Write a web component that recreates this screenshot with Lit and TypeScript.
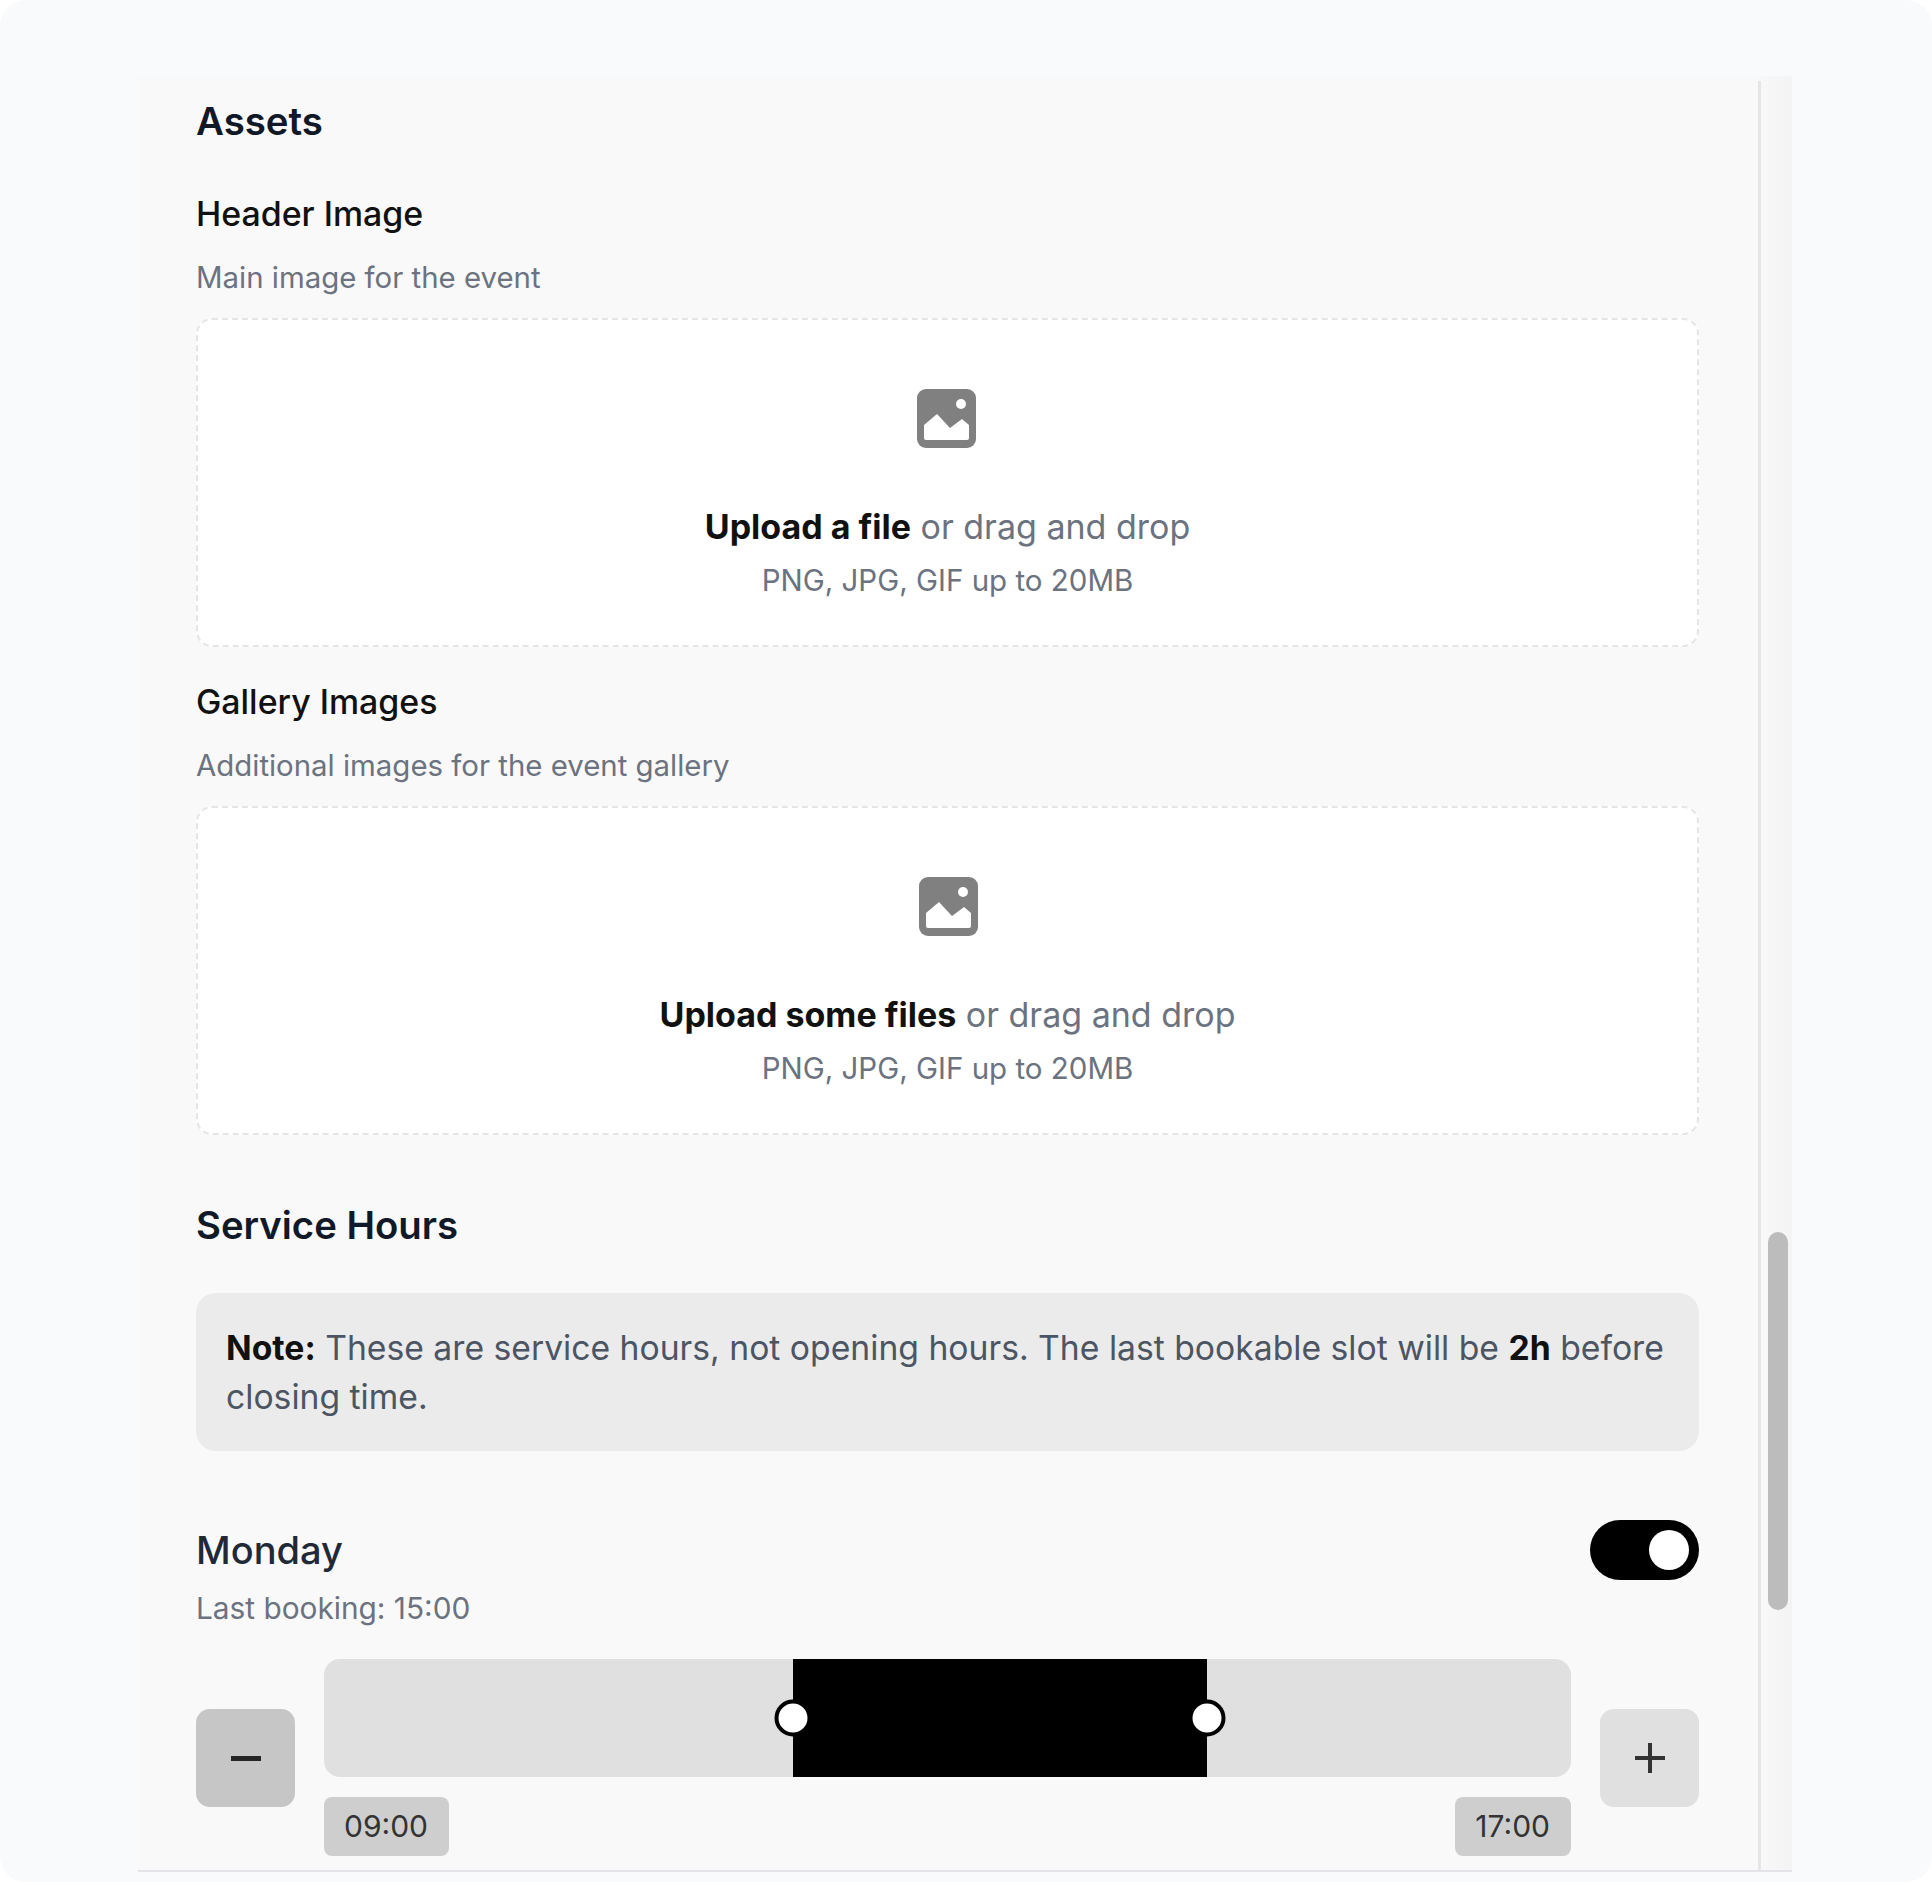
import {html, css, LitElement} from 'lit';
import {customElement} from 'lit/decorators.js';

const imageIcon = html`<svg class="icon-svg" viewBox="0 0 59 59" width="59" height="59">
  <rect width="59" height="59" rx="9" fill="#808080"></rect>
  <circle cx="44" cy="15" r="5" fill="#fff"></circle>
  <path d="M7 36 L20 25 L33 39 L45 30 L52 36 V49 Q52 51 50 51 H9 Q7 51 7 49 Z" fill="#fff"></path>
</svg>`;

@customElement('app-root')
class AppRoot extends LitElement {
  static styles = css`
    :host {
      display: block;
      width: 1932px;
      height: 1882px;
      background: #fff;
      font-family: Inter, 'Liberation Sans', sans-serif;
    }

    .frame {
      height: 1882px;
      box-sizing: border-box;
      background: #f9fafb;
      border-radius: 26px;
      padding: 76px 140px 10px 138px;
    }

    .panel {
      display: flex;
      height: 1796px;
      box-sizing: border-box;
      background: #f9f9f9;
      border-bottom: 2px solid #e4e4e8;
      overflow: hidden;
    }

    .main {
      flex: 1;
      min-width: 0;
      padding: 0 59px 0 58px;
    }

    .gutter {
      width: 34px;
      display: flex;
      background: linear-gradient(90deg, #f8f8f8, #f4f4f4);
    }

    .gutter-line {
      width: 3px;
      margin-top: 5px;
      background: #e6e6e6;
    }

    .thumb {
      width: 20px;
      height: 378px;
      margin: 1156px 0 0 7px;
      background: #bcbcbc;
      border-radius: 10px;
    }

    h2 {
      margin: 0;
      font-weight: 600;
      color: #111827;
    }

    .assets-title {
      font-size: 38.4px;
      line-height: 50px;
      margin-top: 20px;
    }

    .field-label {
      font-size: 33.9px;
      line-height: 44px;
      font-weight: 500;
      color: #111;
    }

    .field-label.first {
      margin-top: 46px;
    }

    .field-label.second {
      margin-top: 33px;
    }

    .field-hint {
      font-size: 29.4px;
      line-height: 40px;
      color: #6b7280;
      margin-top: 22px;
    }

    .dropzone {
      box-sizing: border-box;
      height: 329px;
      margin-top: 20px;
      background: #fff;
      border: 2px dashed #e5e5e5;
      border-radius: 16px;
      display: flex;
      flex-direction: column;
      align-items: center;
      padding-top: 69px;
    }

    .icon-svg {
      display: block;
    }

    .icon-first {
      margin-right: 3px;
    }

    .icon-second {
      margin-left: 2px;
    }

    .drop-main {
      font-size: 34px;
      line-height: 48px;
      margin-top: 55px;
      color: #6b7280;
    }

    .drop-main b {
      font-weight: 700;
      color: #111;
    }

    .drop-sub {
      font-size: 29.5px;
      line-height: 40px;
      margin-top: 9px;
      color: #6b7280;
    }

    .hours-title {
      font-size: 38.3px;
      line-height: 50px;
      margin-top: 65px;
    }

    .note {
      box-sizing: border-box;
      height: 158px;
      margin-top: 43px;
      padding: 30px 30px;
      background: #ebebeb;
      border-radius: 20px;
      font-size: 33.7px;
      line-height: 49px;
      color: #4b5563;
    }

    .note b {
      font-weight: 700;
      color: #111;
    }

    .day-row {
      display: flex;
      justify-content: space-between;
      align-items: center;
      margin-top: 69px;
    }

    .day-name {
      font-size: 38px;
      line-height: 60px;
      font-weight: 500;
      color: #1f2937;
    }

    .toggle {
      width: 109px;
      height: 60px;
      box-sizing: border-box;
      background: #000;
      border-radius: 30px;
      display: flex;
      justify-content: flex-end;
      align-items: center;
      padding-right: 10px;
    }

    .knob {
      width: 40px;
      height: 40px;
      background: #fff;
      border-radius: 50%;
    }

    .last-booking {
      font-size: 29.8px;
      line-height: 40px;
      color: #6b7280;
      margin-top: 8px;
    }

    .slider-row {
      display: grid;
      grid-template-columns: 99px 1fr 99px;
      column-gap: 29px;
      align-items: center;
      margin-top: 31px;
    }

    .step {
      height: 98px;
      border-radius: 14px;
      display: flex;
      align-items: center;
      justify-content: center;
    }

    .step.minus {
      background: #c6c6c6;
    }

    .step.plus {
      background: #e0e0e0;
    }

    .track {
      position: relative;
      height: 118px;
      background: #e0e0e0;
      border-radius: 16px;
    }

    .range {
      position: absolute;
      top: 0;
      bottom: 0;
      background: #000;
    }

    .handle {
      position: absolute;
      top: 50%;
      width: 37px;
      height: 37px;
      box-sizing: border-box;
      background: #fff;
      border: 4px solid #000;
      border-radius: 50%;
      transform: translate(-50%, -50%);
    }

    .chips {
      display: flex;
      justify-content: space-between;
      margin-top: 20px;
    }

    .chip {
      height: 59px;
      box-sizing: border-box;
      padding: 0 21px 2px 20px;
      display: flex;
      align-items: center;
      background: #cecece;
      border-radius: 8px;
      font-size: 30px;
      color: #333;
    }
  `;

  // track runs 09:00 to 17:00 between these two pixel stops
  range = {start: 469, end: 883};

  render() {
    const {start, end} = this.range;
    return html`
      <div class="frame">
        <div class="panel">
          <div class="main">
            <h2 class="assets-title">Assets</h2>

            <div class="field-label first">Header Image</div>
            <div class="field-hint">Main image for the event</div>
            <div class="dropzone">
              <div class="icon-first">${imageIcon}</div>
              <div class="drop-main"><b>Upload a file</b> or drag and drop</div>
              <div class="drop-sub">PNG, JPG, GIF up to 20MB</div>
            </div>

            <div class="field-label second">Gallery Images</div>
            <div class="field-hint">Additional images for the event gallery</div>
            <div class="dropzone">
              <div class="icon-second">${imageIcon}</div>
              <div class="drop-main"><b>Upload some files</b> or drag and drop</div>
              <div class="drop-sub">PNG, JPG, GIF up to 20MB</div>
            </div>

            <h2 class="hours-title">Service Hours</h2>
            <div class="note">
              <b>Note:</b> These are service hours, not opening hours. The last bookable slot will be <b>2h</b> before closing time.
            </div>

            <div class="day-row">
              <div class="day-name">Monday</div>
              <div class="toggle"><div class="knob"></div></div>
            </div>
            <div class="last-booking">Last booking: 15:00</div>

            <div class="slider-row">
              <div class="step minus">
                <svg width="30" height="30" viewBox="0 0 30 30"><rect x="0" y="13" width="30" height="5" fill="#262626"></rect></svg>
              </div>
              <div>
                <div class="track">
                  <div class="range" style="left:${start}px;width:${end - start}px"></div>
                  <div class="handle" style="left:${start}px"></div>
                  <div class="handle" style="left:${end}px"></div>
                </div>
                <div class="chips">
                  <div class="chip">09:00</div>
                  <div class="chip">17:00</div>
                </div>
              </div>
              <div class="step plus">
                <svg width="30" height="30" viewBox="0 0 30 30"><path d="M0 13h13V0h4v13h13v4H17v13h-4V17H0z" fill="#333"></path></svg>
              </div>
            </div>
          </div>
          <div class="gutter">
            <div class="gutter-line"></div>
            <div class="thumb"></div>
          </div>
        </div>
      </div>
    `;
  }
}
